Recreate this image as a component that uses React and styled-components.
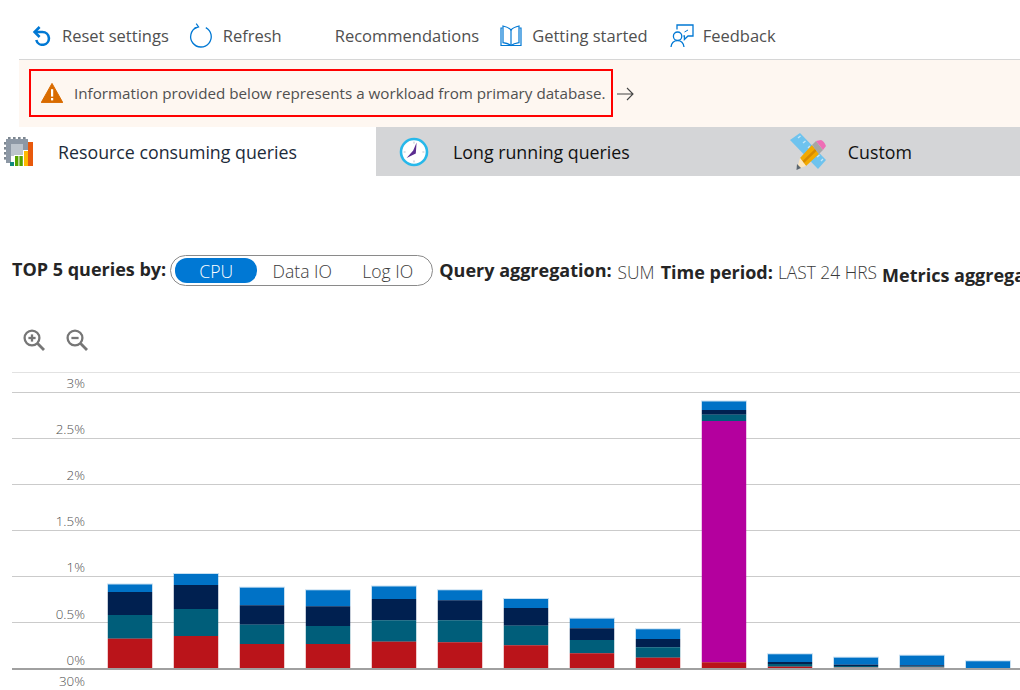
import React from "react";
import styled, { createGlobalStyle } from "styled-components";

const GlobalStyle = createGlobalStyle`
  html, body {
    margin: 0;
    padding: 0;
    background: #fff;
    font-family: "Open Sans", "Liberation Sans", sans-serif;
    overflow: hidden;
  }
`;

const Page = styled.div`
  width: 1020px;
  height: 690px;
  overflow: hidden;
  display: flex;
  flex-direction: column;
`;

const Toolbar = styled.div`
  height: 47px;
  padding-top: 12px;
  margin-left: 19px;
  padding-left: 12px;
  display: flex;
  align-items: center;
  border-bottom: 1px solid #d6d6d6;
`;

const ToolButton = styled.div`
  display: flex;
  align-items: center;
  gap: ${(p) => p.$gap || 10}px;
  margin-right: ${(p) => p.$after || 20}px;
  font-size: 16.5px;
  color: #505050;
  white-space: nowrap;
  svg { flex: none; }
`;

const Banner = styled.div`
  height: 67px;
  margin-left: 19px;
  padding-left: 10px;
  background: #fef7f1;
  display: flex;
  align-items: center;
`;

const Notice = styled.div`
  width: 584px;
  height: 48px;
  box-sizing: border-box;
  margin-bottom: 2px;
  border: 2px solid #f00;
  display: flex;
  align-items: center;
  gap: 11px;
  padding-left: 10px;
  font-size: 15.2px;
  color: #505050;
  white-space: nowrap;
`;

const ArrowLink = styled.svg`
  margin-left: 4px;
`;

const Tabs = styled.div`
  height: 49px;
  display: grid;
  grid-template-columns: 376px 1fr;
`;

const ActiveTab = styled.div`
  display: flex;
  align-items: center;
  padding-left: 4px;
  gap: 24px;
  background: #fff;
  font-size: 17.8px;
  color: #1c2b3a;
`;

const OtherTabs = styled.div`
  display: flex;
  align-items: center;
  padding-left: 23px;
  background: #d4d5d7;
  font-size: 17.8px;
  color: #111;
`;

const TabItem = styled.div`
  display: flex;
  align-items: center;
  gap: ${(p) => p.$gap}px;
  margin-right: ${(p) => p.$after || 0}px;
  white-space: nowrap;
`;

const FilterRow = styled.div`
  height: 34px;
  margin-top: 78px;
  padding-left: 12px;
  display: flex;
  align-items: flex-start;
  white-space: nowrap;
  overflow: hidden;
  color: #3a3a3a;
`;

const Label = styled.span`
  font-size: 18px;
  font-weight: 700;
  color: #252525;
  margin-top: ${(p) => p.$drop || 0}px;
  margin-left: ${(p) => p.$left || 0}px;
  line-height: 24px;
`;

const Value = styled.span`
  font-size: 17.4px;
  font-weight: 300;
  margin-left: ${(p) => p.$left || 5}px;
  line-height: 24px;
  margin-top: ${(p) => p.$drop || 0}px;
`;

const Pills = styled.div`
  width: 263px;
  height: 31px;
  margin: 1px 0 0 4px;
  box-sizing: border-box;
  border: 1px solid #8a8a8a;
  border-radius: 16px;
  padding: 2px 4px;
  display: flex;
  align-items: stretch;
  font-size: 17.6px;
`;

const Pill = styled.div`
  width: ${(p) => p.$w}px;
  border-radius: 12px;
  display: flex;
  align-items: center;
  justify-content: center;
  background: ${(p) => (p.$on ? "#0078d4" : "transparent")};
  color: ${(p) => (p.$on ? "#fff" : "#3a3a3a")};
  font-weight: 300;
`;

const ZoomRow = styled.div`
  height: 26px;
  margin-top: 39px;
  padding-left: 23px;
  display: flex;
  align-items: center;
  gap: 21px;
`;

const Chart = styled.svg`
  display: block;
  margin-top: 7px;
  flex: none;
`;

const TickText = styled.text`
  font-size: 13.4px;
  font-weight: 300;
  fill: #505050;
  text-anchor: end;
`;

const BLUE = "#0072c6";
const NAVY = "#002050";
const TEAL = "#005e7a";
const RED = "#ba141a";
const MAGENTA = "#b4009e";

// y of each segment's top edge, page coords, top segment first
const BARS = [
  [[584.5, BLUE], [592, NAVY], [615, TEAL], [638.7, RED]],
  [[574, BLUE], [585, NAVY], [609, TEAL], [636, RED]],
  [[587.7, BLUE], [605.3, NAVY], [624.7, TEAL], [644, RED]],
  [[590.3, BLUE], [606.3, NAVY], [626, TEAL], [644, RED]],
  [[586.5, BLUE], [599, NAVY], [620.3, TEAL], [641.7, RED]],
  [[590.3, BLUE], [600.3, NAVY], [620.3, TEAL], [642.3, RED]],
  [[599, BLUE], [608, NAVY], [625.7, TEAL], [645.3, RED]],
  [[618.7, BLUE], [628.3, NAVY], [640, TEAL], [653.3, RED]],
  [[629.3, BLUE], [639, NAVY], [647.3, TEAL], [657.7, RED]],
  [[401.5, BLUE], [410, NAVY], [414.7, TEAL], [421, MAGENTA], [662.3, RED]],
  [[654.3, BLUE], [662, NAVY], [664, TEAL], [666.7, RED]],
  [[657.7, BLUE], [664.7, NAVY], [666, TEAL], [667.5, "#c98a80"]],
  [[655.7, BLUE], [665.3, NAVY], [666.5, TEAL], [667.5, "#c98a80"]],
  [[661.3, BLUE]],
];

const TICKS = [
  ["3%", 392],
  ["2.5%", 438],
  ["2%", 484],
  ["1.5%", 530],
  ["1%", 576],
  ["0.5%", 622.5],
  ["0%", 668.5],
];

const CHART_TOP = 360;
const BAR_BOTTOM = 668;

const BarChart = () => (
  <Chart width="1020" height="330" viewBox={`0 ${CHART_TOP} 1020 330`}>
    <rect x="12" y="372" width="1008" height="1" fill="#e2e2e2" />
    {TICKS.map(([label, y]) => (
      <g key={label}>
        <rect x="12" y={Math.floor(y)} width="1008" height={label === "0%" ? 2 : 1} fill={label === "0%" ? "#a0a0a0" : "#cbcbcb"} />
        <TickText x="85" y={y - 4}>{label}</TickText>
      </g>
    ))}
    <TickText x="85" y="686">30%</TickText>
    {BARS.map((segments, i) => {
      const x = 108 + i * 66;
      return (
        <g key={i}>
          {segments.map(([top, color], j) => {
            const next = j + 1 < segments.length ? segments[j + 1][0] : BAR_BOTTOM;
            return (
              <g key={j}>
                <rect x={x - 1} y={j === 0 ? top - 1 : top} width="46" height={next - top + (j === 0 ? 1 : 0)} fill={color} opacity="0.22" />
                <rect x={x} y={top} width="44" height={next - top} fill={color} />
              </g>
            );
          })}
        </g>
      );
    })}
  </Chart>
);

const ResetIcon = () => (
  <svg width="21" height="21" viewBox="0 0 21 21" fill="none" stroke="#0078d4" strokeWidth="2.6">
    <path d="M4 7 H11.5 a6.4 6.4 0 1 1 -6.2 8" />
    <path d="M8.6 2 L3.6 7 L8.6 12" />
  </svg>
);

const RefreshIcon = () => (
  <svg width="24" height="25" viewBox="0 0 24 25" fill="none" stroke="#0078d4" strokeWidth="1.3">
    <path d="M7.5 4.4 A10.3 10.3 0 1 0 16.8 4.6" />
    <path d="M7.2 0.6 L9.6 3.9 L5.4 5.4" strokeWidth="1.2" />
  </svg>
);

const BookIcon = () => (
  <svg width="22" height="22" viewBox="0 0 22 22" fill="none" stroke="#0078d4" strokeWidth="1.2">
    <path d="M2.6 3 H1 V20.5 H21 V3 H19.4" />
    <path d="M11 5 C9 2.6 6 1.6 3 1 V17.6 C6 18 9 18.8 11 20.5 C13 18.8 16 18 19 17.6 V1 C16 1.6 13 2.6 11 5 Z" />
    <path d="M11 5 V20.5" />
  </svg>
);

const FeedbackIcon = () => (
  <svg width="24" height="24" viewBox="0 0 24 24" fill="none" stroke="#0078d4" strokeWidth="1.3">
    <circle cx="7.6" cy="12.2" r="4.2" />
    <path d="M1 23 C1.5 18.8 4 16.6 7.6 16.6 C11 16.6 13.4 18.6 14 23" />
    <path d="M7 5.5 V1 H23 V12 H18 L14.4 15.4 V12 H13.4" />
    <path d="M14.5 8 L18 6" strokeWidth="1" />
  </svg>
);

const WarningIcon = () => (
  <svg width="22" height="20" viewBox="0 0 22 20">
    <path d="M11 0.4 L21.8 19.6 H0.2 Z" fill="#d96b00" strokeLinejoin="round" stroke="#d96b00" />
    <rect x="10" y="6.2" width="2.2" height="7.4" fill="#fff" />
    <rect x="10" y="15" width="2.2" height="2.4" fill="#fff" />
  </svg>
);

const ChipIcon = () => (
  <svg width="30" height="30" viewBox="0 0 30 30">
    {[3, 8, 13, 18].map((x) => (
      <rect key={x} x={x + 1} y="0" width="2.6" height="3" fill="#7d8791" />
    ))}
    {[5, 10, 15, 20].map((y) => (
      <rect key={y} x="0" y={y} width="3" height="2.6" fill="#7d8791" />
    ))}
    <rect x="2" y="2" width="22" height="24" fill="#8d98a5" />
    <rect x="7" y="7" width="12" height="12" fill="#bcc4cc" />
    <rect x="7" y="19" width="3" height="7" fill="#fff" />
    <rect x="6" y="25" width="4" height="4" fill="#0f8a7e" />
    <rect x="10" y="18" width="9" height="11" fill="#fff" />
    <rect x="11" y="19" width="3.4" height="10" fill="#57a300" />
    <rect x="15.4" y="19" width="3.4" height="10" fill="#57a300" />
    <rect x="19" y="13" width="5" height="16" fill="#fff" />
    <rect x="20" y="14" width="4" height="15" fill="#ffb900" />
    <rect x="24" y="5" width="5" height="24" fill="#e8590c" />
  </svg>
);

const ClockIcon = () => (
  <svg width="30" height="30" viewBox="0 0 30 30">
    <circle cx="15" cy="15" r="13" fill="#fff" stroke="#27b8ea" strokeWidth="2.6" />
    <g fill="#c3ccd4">
      <rect x="14.4" y="4.6" width="1.2" height="2" />
      <rect x="14.4" y="23.4" width="1.2" height="2" />
      <rect x="4.6" y="14.4" width="2" height="1.2" />
      <rect x="23.4" y="14.4" width="2" height="1.2" />
    </g>
    <path d="M17.6 5.5 L16.8 16.4 L7.6 21 L14.2 13.6 Z" fill="#5c2d91" />
  </svg>
);

const PencilRulerIcon = () => (
  <svg width="37" height="37" viewBox="0 0 37 37">
    <path d="M0 7 L10 0 L36 27 L28 36 Z" fill="#6ec3ee" />
    <path d="M8 5 L10.5 3 M13 10 L15.5 8 M18 15 L20 13 M27 24 L29.5 22 M31 28 L33 26" stroke="#c4e6f8" strokeWidth="1.4" />
    <path d="M10 25 L22 12 L29 21 L16 33 Z" fill="#f2a900" />
    <path d="M12.5 28 L25 16 L26.5 18 L14 30 Z" fill="#d78a00" />
    <path d="M10 25 L16 33 L7 36 Z" fill="#fde6bd" />
    <path d="M7 31 L11 35 L6.5 37 Z" fill="#5b6670" />
    <path d="M22 12 L26 8 L33 17 L29 21 Z" fill="#a6a6a6" />
    <path d="M26 8 L31 7 Q34 8 36 13 L33 17 Z" fill="#ee6eb6" />
  </svg>
);

const ZoomIcon = ({ plus }) => (
  <svg width="22" height="22" viewBox="0 0 22 22" fill="none" stroke="#767676" strokeWidth="2.3">
    <circle cx="9" cy="9" r="7.4" />
    <path d="M14.6 14.6 L21 21" strokeWidth="2.8" />
    <path d="M5.4 9 H12.6" />
    {plus && <path d="M9 5.4 V12.6" />}
  </svg>
);

const App = () => (
  <Page>
    <GlobalStyle />
    <Toolbar>
      <ToolButton $gap={10} $after={20}><ResetIcon />Reset settings</ToolButton>
      <ToolButton $gap={10} $after={53}><RefreshIcon />Refresh</ToolButton>
      <ToolButton $after={21}>Recommendations</ToolButton>
      <ToolButton $gap={10} $after={22}><BookIcon />Getting started</ToolButton>
      <ToolButton $gap={9}><FeedbackIcon />Feedback</ToolButton>
    </Toolbar>
    <Banner>
      <Notice>
        <WarningIcon />
        Information provided below represents a workload from primary database.
      </Notice>
      <ArrowLink width="17" height="14" viewBox="0 0 17 14" fill="none" stroke="#444" strokeWidth="1.1">
        <path d="M0 7 H16 M10 1 L16 7 L10 13" />
      </ArrowLink>
    </Banner>
    <Tabs>
      <ActiveTab><ChipIcon />Resource consuming queries</ActiveTab>
      <OtherTabs>
        <TabItem $gap={24} $after={160}><ClockIcon />Long running queries</TabItem>
        <TabItem $gap={21}><PencilRulerIcon />Custom</TabItem>
      </OtherTabs>
    </Tabs>
    <FilterRow>
      <Label $drop={3}>TOP 5 queries by:</Label>
      <Pills>
        <Pill $on $w={83}>CPU</Pill>
        <Pill $w={91}>Data IO</Pill>
        <Pill $w={82}>Log IO</Pill>
      </Pills>
      <Label $left={6} $drop={4}>Query aggregation:</Label>
      <Value $left={6} $drop={6}>SUM</Value>
      <Label $left={6} $drop={6}>Time period:</Label>
      <Value $left={5} $drop={6}>LAST 24 HRS</Value>
      <Label $left={5} $drop={9}>Metrics aggregation:</Label>
    </FilterRow>
    <ZoomRow>
      <ZoomIcon plus />
      <ZoomIcon />
    </ZoomRow>
    <Chart as={BarChart} />
  </Page>
);

export default App;
